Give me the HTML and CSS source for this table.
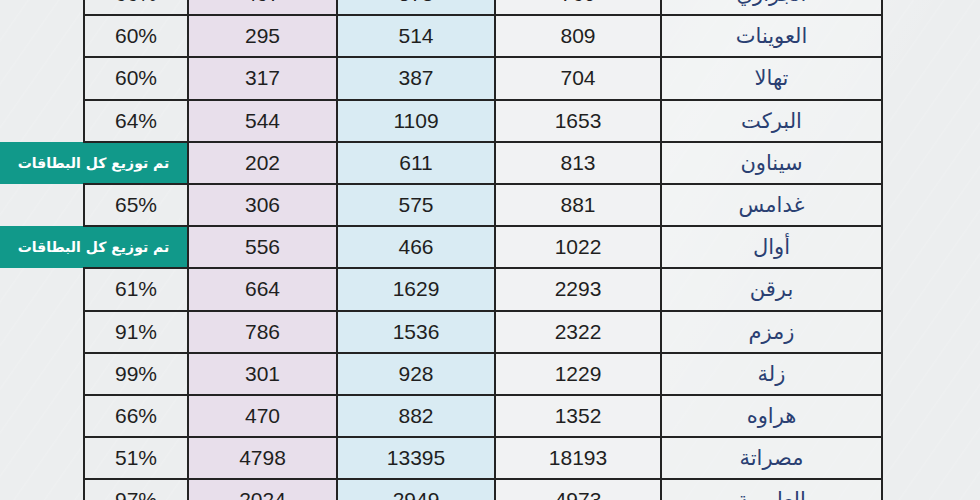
FILE: index.html
```html
<!DOCTYPE html>
<html lang="ar">
<head>
<meta charset="utf-8">
<link rel="stylesheet" href="styles.css">
</head>
<body>
<div class="page">
  <table class="stats" dir="rtl">
    <colgroup>
      <col class="c-name"><col class="c-total"><col class="c-blue"><col class="c-purple"><col class="c-pct"><col class="c-note">
    </colgroup>
    <tbody>
      <tr><td class="name">الجزاري</td><td class="total">760</td><td class="blue">573</td><td class="purple">497</td><td class="pct">66%</td><td class="note"></td></tr>
      <tr><td class="name">العوينات</td><td class="total">809</td><td class="blue">514</td><td class="purple">295</td><td class="pct">60%</td><td class="note"></td></tr>
      <tr><td class="name">تهالا</td><td class="total">704</td><td class="blue">387</td><td class="purple">317</td><td class="pct">60%</td><td class="note"></td></tr>
      <tr><td class="name">البركت</td><td class="total">1653</td><td class="blue">1109</td><td class="purple">544</td><td class="pct">64%</td><td class="note"></td></tr>
      <tr><td class="name">سيناون</td><td class="total">813</td><td class="blue">611</td><td class="purple">202</td><td class="done" colspan="2">تم توزيع كل البطاقات</td></tr>
      <tr><td class="name">غدامس</td><td class="total">881</td><td class="blue">575</td><td class="purple">306</td><td class="pct">65%</td><td class="note"></td></tr>
      <tr><td class="name">أوال</td><td class="total">1022</td><td class="blue">466</td><td class="purple">556</td><td class="done" colspan="2">تم توزيع كل البطاقات</td></tr>
      <tr><td class="name">برقن</td><td class="total">2293</td><td class="blue">1629</td><td class="purple">664</td><td class="pct">61%</td><td class="note"></td></tr>
      <tr><td class="name">زمزم</td><td class="total">2322</td><td class="blue">1536</td><td class="purple">786</td><td class="pct">91%</td><td class="note"></td></tr>
      <tr><td class="name">زلة</td><td class="total">1229</td><td class="blue">928</td><td class="purple">301</td><td class="pct">99%</td><td class="note"></td></tr>
      <tr><td class="name">هراوه</td><td class="total">1352</td><td class="blue">882</td><td class="purple">470</td><td class="pct">66%</td><td class="note"></td></tr>
      <tr><td class="name">مصراتة</td><td class="total">18193</td><td class="blue">13395</td><td class="purple">4798</td><td class="pct">51%</td><td class="note"></td></tr>
      <tr><td class="name">العامرية</td><td class="total">4973</td><td class="blue">2949</td><td class="purple">2024</td><td class="pct">97%</td><td class="note"></td></tr>
    </tbody>
  </table>
</div>
</body>
</html>
```

FILE: styles.css
```css
html, body {
  margin: 0;
  padding: 0;
}
body {
  width: 980px;
  height: 500px;
  overflow: hidden;
  background-color: #eceeef;
  background-image:
    linear-gradient(120deg, rgba(255,255,255,0) 45%, rgba(255,255,255,0.3) 60%, rgba(255,255,255,0) 75%),
    repeating-linear-gradient(125deg, rgba(255,255,255,0) 0px, rgba(255,255,255,0) 22px, rgba(255,255,255,0.12) 23px, rgba(255,255,255,0) 25px);
}
.stats {
  margin-top: -28px;
  border-collapse: collapse;
  table-layout: fixed;
  width: 882px;
  font-family: "Liberation Sans", Arial, sans-serif;
  font-size: 21px;
  color: #1f1f1f;
}
.c-name { width: 221px; }
.c-total { width: 166px; }
.c-blue { width: 158px; }
.c-purple { width: 149px; }
.c-pct { width: 104px; }
.c-note { width: 84px; }
.stats tr {
  height: 42.2px;
}
.stats td {
  border: 2px solid #232323;
  text-align: center;
  vertical-align: middle;
  padding: 0;
  height: 40px;
  line-height: 24px;
}
.stats td.note {
  border: none;
}
.name {
  font-family: "DejaVu Sans", sans-serif;
  font-size: 21px;
  color: #2a3f72;
  background: rgba(244,245,246,0.5);
}
.total {
  background: #f1f2f3;
}
.blue {
  background: #d9ebf3;
}
.purple {
  background: #e8dfeb;
}
.pct {
  background: transparent;
}
.stats td.done {
  background: #11998a;
  color: #ffffff;
  font-family: "DejaVu Sans", sans-serif;
  font-weight: bold;
  font-size: 14px;
  border-top: none;
  border-bottom: none;
  border-left: none;
}
```
